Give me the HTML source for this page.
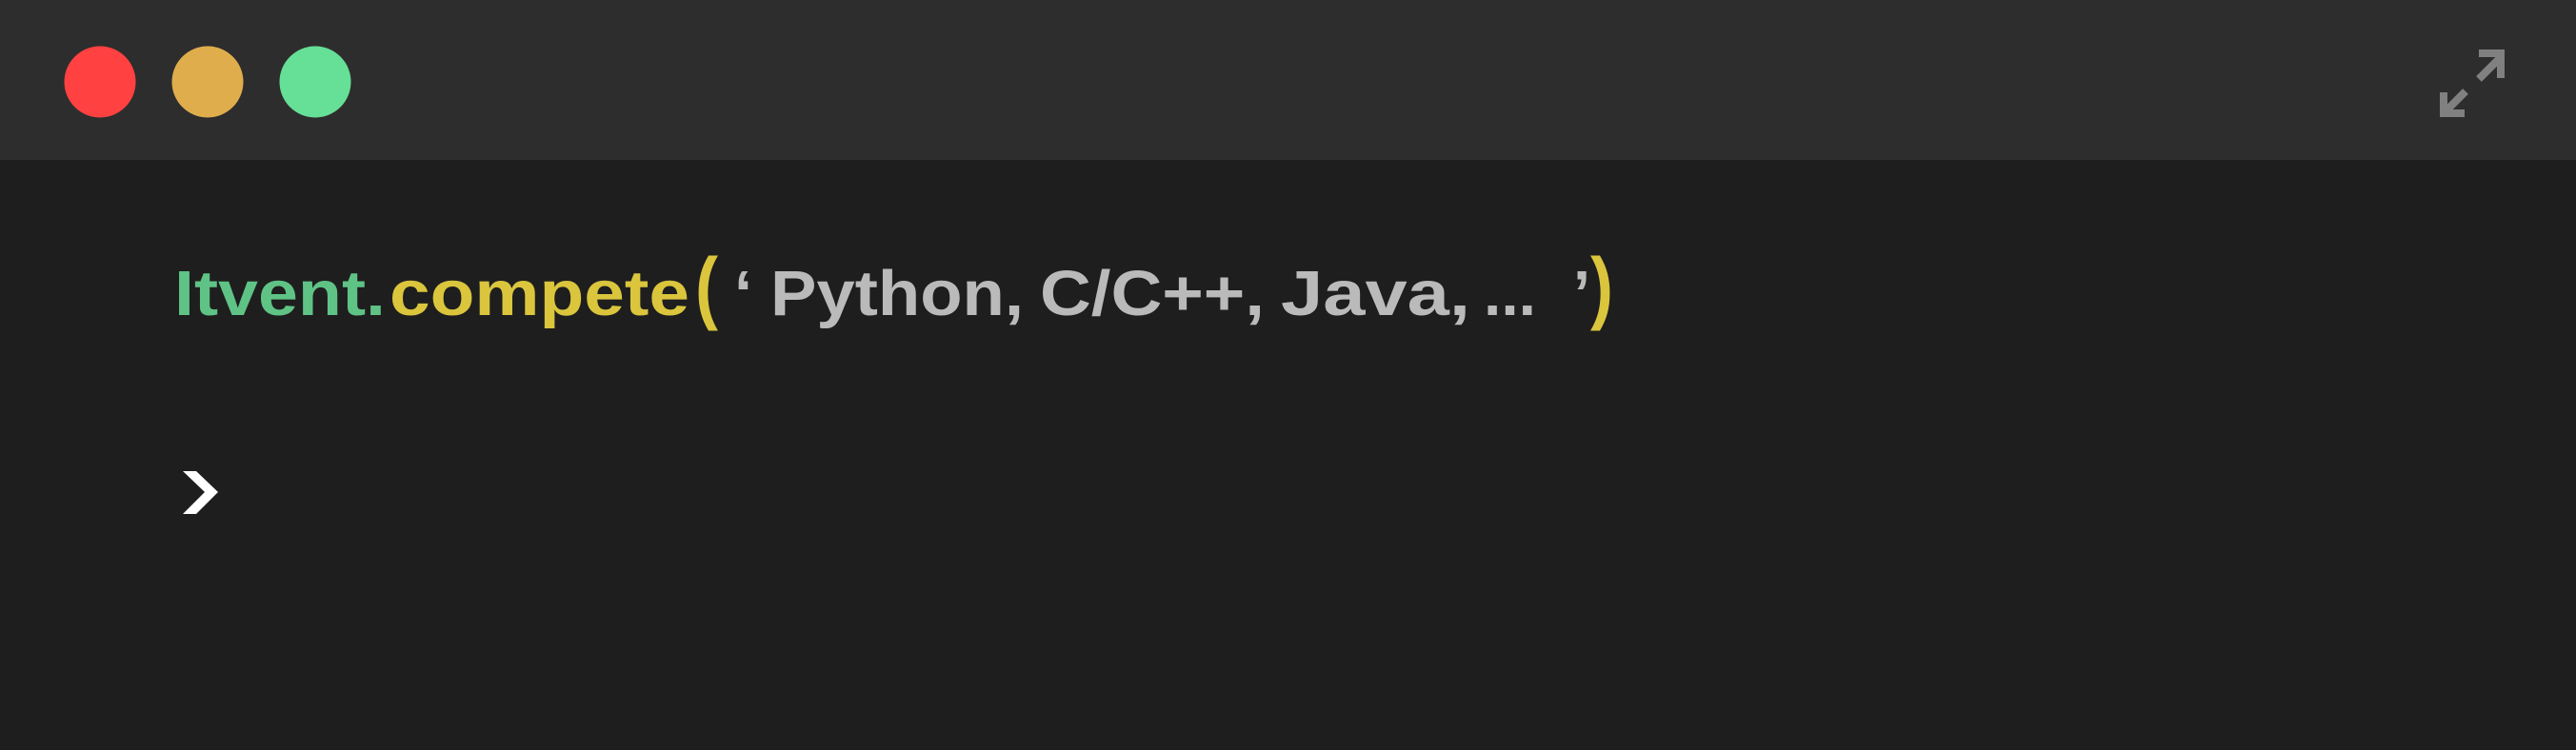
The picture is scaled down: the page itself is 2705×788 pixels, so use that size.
<!DOCTYPE html>
<html><head><meta charset="utf-8"><style>
html,body{margin:0;padding:0;width:2705px;height:788px;overflow:hidden;background:#1e1e1e}
svg{display:block}
</style></head><body>
<svg width="2705" height="788" xmlns="http://www.w3.org/2000/svg">
<rect width="2705" height="788" fill="#1e1e1e"/>
<rect width="2705" height="168" fill="#2d2d2d"/>
<circle cx="105" cy="86" r="37.5" fill="#ff4141"/>
<circle cx="218" cy="86" r="37.5" fill="#e0ad4c"/>
<circle cx="331" cy="86" r="37.5" fill="#66df97"/>
<g fill="none" stroke="#808080" stroke-width="8">
<path d="M2603 56 H2626 V82"/><path d="M2626 60 L2603 83"/>
<path d="M2566 97 V119 H2588"/><path d="M2566 119 L2589 96"/>
</g>
<g font-family="Liberation Sans, sans-serif" font-weight="bold" font-size="67">
<text x="183" y="331" fill="#5fc386" textLength="222" lengthAdjust="spacingAndGlyphs">Itvent.</text>
<text x="409" y="331" fill="#dac53d" textLength="315" lengthAdjust="spacingAndGlyphs">compete</text>
<text x="730" y="330" fill="#dac53d" font-size="84" textLength="24" lengthAdjust="spacingAndGlyphs">(</text>
<text x="771" y="331" fill="#bababa" textLength="19" lengthAdjust="spacingAndGlyphs">‘</text>
<text x="809" y="331" fill="#bababa" textLength="266" lengthAdjust="spacingAndGlyphs">Python,</text>
<text x="1092" y="331" fill="#bababa" textLength="236" lengthAdjust="spacingAndGlyphs">C/C++,</text>
<text x="1345" y="331" fill="#bababa" textLength="199" lengthAdjust="spacingAndGlyphs">Java,</text>
<text x="1558" y="331" fill="#bababa" textLength="55" lengthAdjust="spacingAndGlyphs">...</text>
<text x="1652" y="331" fill="#bababa" textLength="18" lengthAdjust="spacingAndGlyphs">’</text>
<text x="1670" y="330" fill="#dac53d" font-size="84" textLength="24" lengthAdjust="spacingAndGlyphs">)</text>
</g>
<polygon points="192,495 206,495 229,517 206,540 192,540 215,517" fill="#ffffff"/>
</svg>
</body></html>
